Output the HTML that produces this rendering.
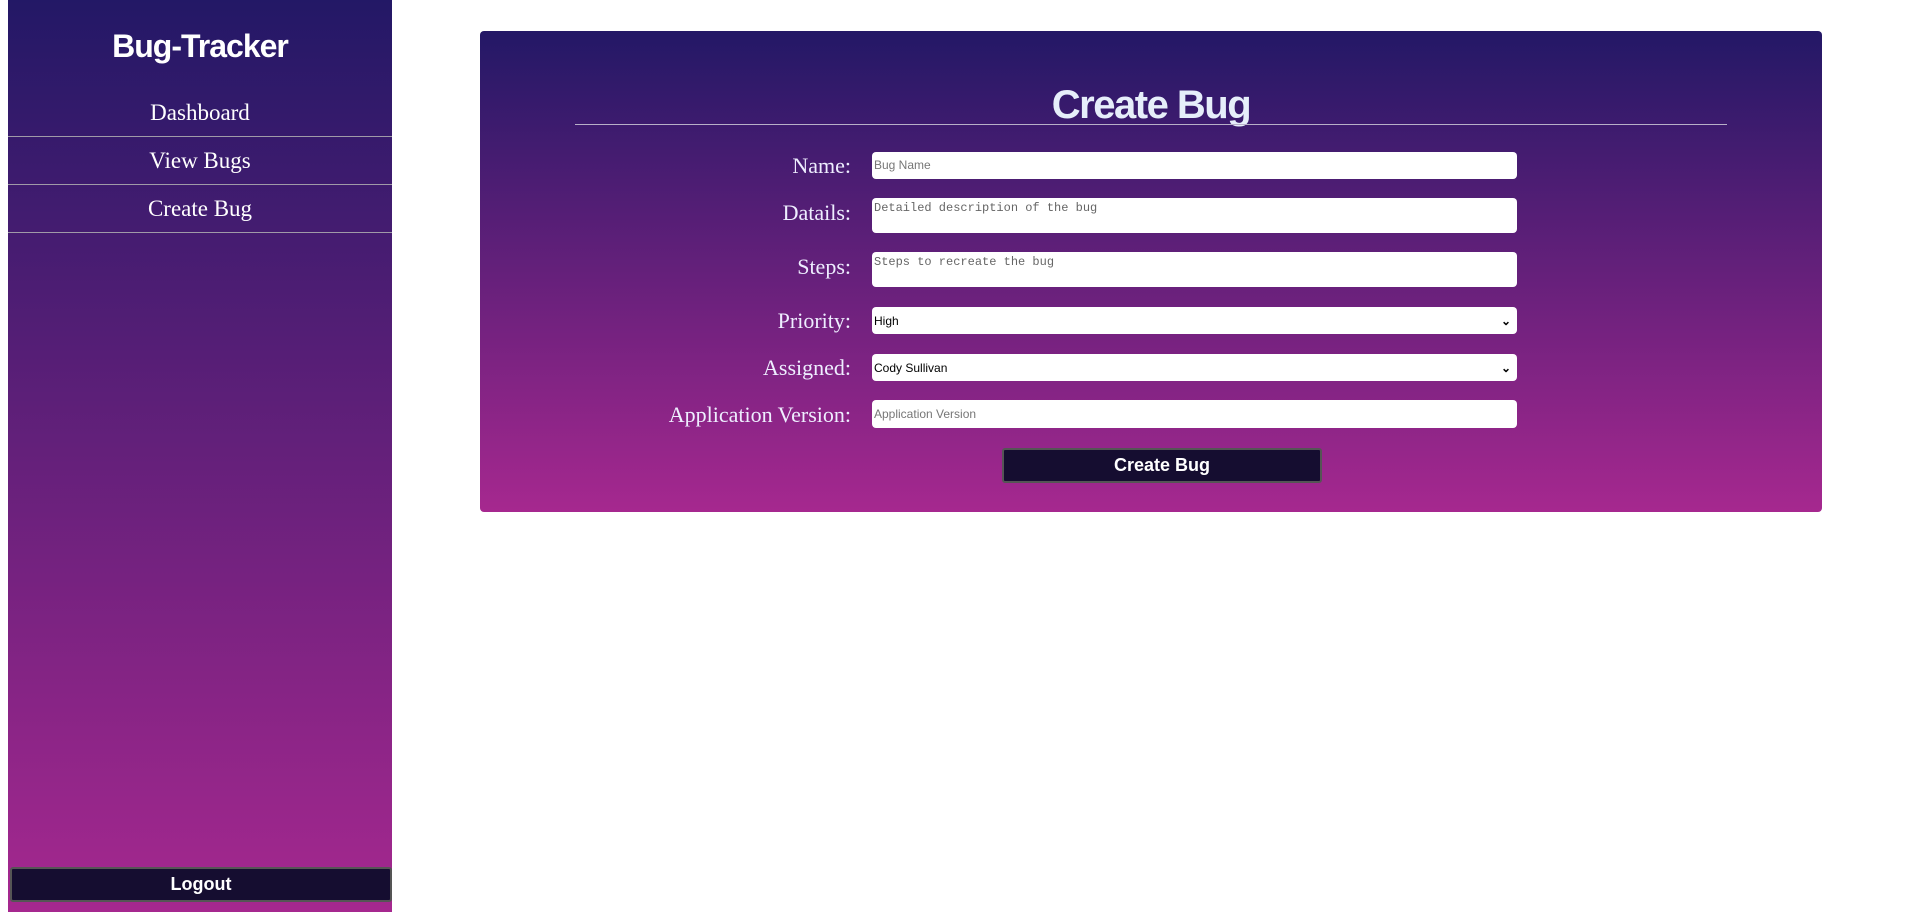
<!DOCTYPE html>
<html><head><style>
*{box-sizing:border-box;margin:0;padding:0}
body{width:1920px;height:912px;background:#fff;position:relative;overflow:hidden;font-family:"Liberation Serif",serif}
.side{position:absolute;left:8px;top:0;width:384px;height:912px;background:linear-gradient(#231866,#a6288f)}
.side h1{font-family:"Liberation Sans",sans-serif;font-weight:bold;color:#fff;font-size:32px;text-align:center;position:absolute;top:28px;width:100%;letter-spacing:-1px}
.nav{position:absolute;top:89px;width:100%}
.nav div{height:48px;border-bottom:1px solid #a09aa8;color:#fff;font-size:23px;text-align:center;line-height:48px}
.logout{position:absolute;left:2px;top:867px;width:382px;height:35px;background:#150d30;border:2px solid #555;border-radius:3px;color:#fff;font:bold 18px "Liberation Sans",sans-serif;text-align:center;line-height:31px}
.card{position:absolute;left:480px;top:31px;width:1342px;height:481px;border-radius:4px;background:linear-gradient(#231866,#a6288f)}
.card h2{position:absolute;top:52px;width:100%;text-align:center;color:#e6eefa;font:bold 40px "Liberation Sans",sans-serif;letter-spacing:-1.5px}
.hr{position:absolute;left:95px;top:93px;width:1152px;height:1px;background:#b8b0c8}
.lbl{position:absolute;right:971px;color:#eef;font-size:22px;text-align:right;white-space:nowrap}
.in{position:absolute;left:392px;width:645px;background:#fff;border-radius:4px;font:12px "Liberation Sans",sans-serif;color:#777;padding:3px 2px}
.mono{font-family:"Liberation Mono",monospace;color:#666;font-size:12px}
.sel{color:#000;display:flex;align-items:center;justify-content:space-between;padding-right:6px}
.btn{position:absolute;left:522px;top:417px;width:320px;height:35px;background:#150d30;border:2px solid #555;border-radius:3px;color:#fff;font:bold 18px "Liberation Sans",sans-serif;text-align:center;line-height:31px}
</style></head><body>
<div class="side">
<h1>Bug-Tracker</h1>
<div class="nav"><div>Dashboard</div><div>View Bugs</div><div>Create Bug</div></div>
<div class="logout">Logout</div>
</div>
<div class="card">
<h2>Create Bug</h2>
<div class="hr"></div>
<div class="lbl" style="top:122px">Name:</div>
<div class="in" style="top:121px;height:27px;line-height:21px">Bug Name</div>
<div class="lbl" style="top:169px">Datails:</div>
<div class="in mono" style="top:167px;height:35px">Detailed description of the bug</div>
<div class="lbl" style="top:223px">Steps:</div>
<div class="in mono" style="top:221px;height:35px">Steps to recreate the bug</div>
<div class="lbl" style="top:277px">Priority:</div>
<div class="in sel" style="top:276px;height:27px"><span>High</span><span style="font-weight:bold">&#8964;</span></div>
<div class="lbl" style="top:324px">Assigned:</div>
<div class="in sel" style="top:323px;height:27px"><span>Cody Sullivan</span><span style="font-weight:bold">&#8964;</span></div>
<div class="lbl" style="top:371px">Application Version:</div>
<div class="in" style="top:369px;height:28px;line-height:22px">Application Version</div>
<div class="btn">Create Bug</div>
</div>
</body></html>
